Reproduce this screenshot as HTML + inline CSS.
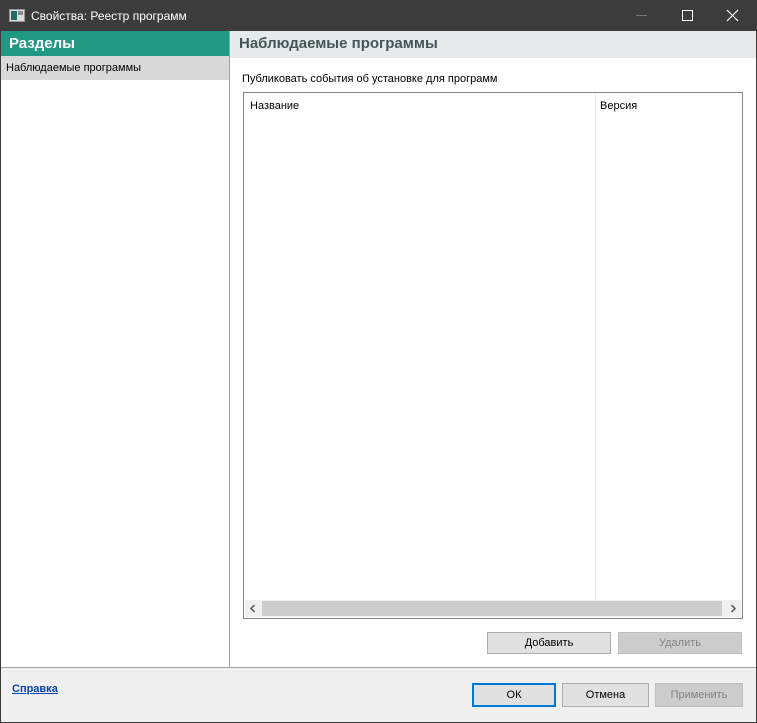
<!DOCTYPE html>
<html><head><meta charset="utf-8"><style>
*{margin:0;padding:0;box-sizing:border-box}
body{width:757px;height:723px;position:relative;background:#3a3a3a;font-family:"Liberation Sans","DejaVu Sans",sans-serif;font-size:11px;color:#000;overflow:hidden}
.a{position:absolute}
.title{left:0;top:0;width:757px;height:31px;background:#3c3c3c;color:#fff;font-size:12px}
.main{left:1px;top:31px;width:755px;height:691px;background:#fff}
.btn{position:absolute;height:22px;background:#e1e1e1;border:1px solid #adadad;text-align:center;line-height:20px;font-size:11px}
.dis{background:#cccccc;border-color:#bfbfbf;color:#838383}
</style></head><body>
<div class="a title">
  <svg class="a" style="left:9px;top:9px" width="16" height="13"><rect x="0.5" y="0.5" width="15" height="12" fill="#ddd" stroke="#999"/><rect x="2" y="2" width="6" height="9" fill="#1b6f66"/><rect x="9" y="2" width="5" height="4" fill="#888"/></svg>
  <div class="a" style="left:31px;top:9px">Свойства: Реестр программ</div>
  <div class="a" style="left:636px;top:15px;width:11px;height:1px;background:#777"></div>
  <div class="a" style="left:682px;top:10px;width:11px;height:11px;border:1px solid #fff"></div>
  <svg class="a" style="left:726px;top:9px" width="13" height="13"><path d="M1 1L12 12M12 1L1 12" stroke="#fff" stroke-width="1.2"/></svg>
</div>
<div class="a main">
  <div class="a" style="left:0;top:0;width:228px;height:25px;background:#219882;color:#fff;font-weight:bold;font-size:15px;padding:4px 0 0 8px">Разделы</div>
  <div class="a" style="left:0;top:25px;width:228px;height:24px;background:#d9d9d9;padding:6px 0 0 5px">Наблюдаемые программы</div>
  <div class="a" style="left:228px;top:0;width:1px;height:637px;background:#a0a0a0"></div>
  <div class="a" style="left:229px;top:0;width:526px;height:27px;background:#e6eaeb;color:#44555a;font-weight:bold;font-size:15px;padding:4px 0 0 9px">Наблюдаемые программы</div>
  <div class="a" style="left:241px;top:42px">Публиковать события об установке для программ</div>
  <div class="a" style="left:242px;top:61px;width:500px;height:527px;border:1px solid #828790;background:#fff">
    <div class="a" style="left:6px;top:7px">Название</div>
    <div class="a" style="left:351px;top:0;width:1px;height:507px;background:#e6eef5"></div>
    <div class="a" style="left:356px;top:7px">Версия</div>
    <div class="a" style="left:1px;top:507px;width:496px;height:17px;background:#f0f0f0">
      <div class="a" style="left:17px;top:1px;width:460px;height:15px;background:#cdcdcd"></div>
      <svg class="a" style="left:4px;top:4px" width="8" height="9"><path d="M5.5 1L2 4.5L5.5 8" stroke="#555" stroke-width="1.5" fill="none"/></svg>
      <svg class="a" style="left:484px;top:4px" width="8" height="9"><path d="M2.5 1L6 4.5L2.5 8" stroke="#555" stroke-width="1.5" fill="none"/></svg>
    </div>
  </div>
  <div class="btn" style="left:486px;top:601px;width:124px">Добавить</div>
  <div class="btn dis" style="left:617px;top:601px;width:124px">Удалить</div>
  <div class="a" style="left:0;top:636px;width:755px;height:1px;background:#a0a0a0"></div>
  <div class="a" style="left:0;top:637px;width:755px;height:54px;background:#f0f0f0">
    <div class="a" style="left:11px;top:15px;color:#0645ad;font-weight:bold;text-decoration:underline">Справка</div>
    <div class="btn" style="left:471px;top:15px;width:84px;height:24px;border:2px solid #0078d7;line-height:20px">ОК</div>
    <div class="btn" style="left:561px;top:15px;width:87px;height:24px;line-height:22px">Отмена</div>
    <div class="btn dis" style="left:654px;top:15px;width:88px;height:24px;line-height:22px">Применить</div>
  </div>
</div>
</body></html>
